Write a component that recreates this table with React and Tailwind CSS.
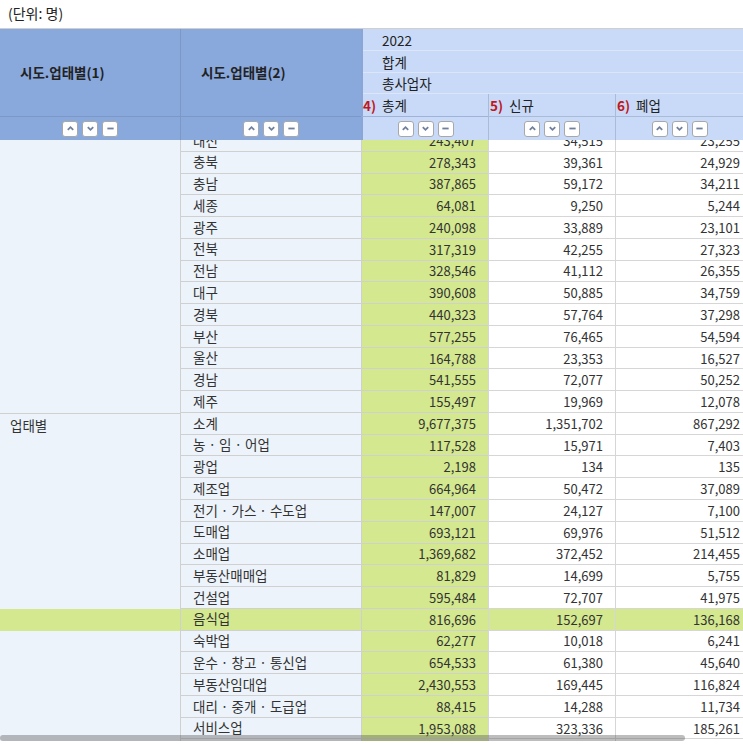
import React from "react";

const rows = [
  { name: "대전", a: "243,407", b: "34,515", c: "23,255" },
  { name: "충북", a: "278,343", b: "39,361", c: "24,929" },
  { name: "충남", a: "387,865", b: "59,172", c: "34,211" },
  { name: "세종", a: "64,081", b: "9,250", c: "5,244" },
  { name: "광주", a: "240,098", b: "33,889", c: "23,101" },
  { name: "전북", a: "317,319", b: "42,255", c: "27,323" },
  { name: "전남", a: "328,546", b: "41,112", c: "26,355" },
  { name: "대구", a: "390,608", b: "50,885", c: "34,759" },
  { name: "경북", a: "440,323", b: "57,764", c: "37,298" },
  { name: "부산", a: "577,255", b: "76,465", c: "54,594" },
  { name: "울산", a: "164,788", b: "23,353", c: "16,527" },
  { name: "경남", a: "541,555", b: "72,077", c: "50,252" },
  { name: "제주", a: "155,497", b: "19,969", c: "12,078" },
  { name: "소계", a: "9,677,375", b: "1,351,702", c: "867,292", group: "업태별" },
  { name: "농 · 임 · 어업", a: "117,528", b: "15,971", c: "7,403" },
  { name: "광업", a: "2,198", b: "134", c: "135" },
  { name: "제조업", a: "664,964", b: "50,472", c: "37,089" },
  { name: "전기 · 가스 · 수도업", a: "147,007", b: "24,127", c: "7,100" },
  { name: "도매업", a: "693,121", b: "69,976", c: "51,512" },
  { name: "소매업", a: "1,369,682", b: "372,452", c: "214,455" },
  { name: "부동산매매업", a: "81,829", b: "14,699", c: "5,755" },
  { name: "건설업", a: "595,484", b: "72,707", c: "41,975" },
  { name: "음식업", a: "816,696", b: "152,697", c: "136,168", active: true },
  { name: "숙박업", a: "62,277", b: "10,018", c: "6,241" },
  { name: "운수 · 창고 · 통신업", a: "654,533", b: "61,380", c: "45,640" },
  { name: "부동산임대업", a: "2,430,553", b: "169,445", c: "116,824" },
  { name: "대리 · 중개 · 도급업", a: "88,415", b: "14,288", c: "11,734" },
  { name: "서비스업", a: "1,953,088", b: "323,336", c: "185,261" },
  { name: "기타", a: "312,004", b: "41,220", c: "28,117" },
];

const cols = "grid grid-cols-[180px_181px_127px_127px_128px]";

// small sort / hide buttons under each column header
const SortButtons = () => (
  <div className="flex items-center justify-center gap-[4px]">
    <button className="w-[16px] h-[16px] flex items-center justify-center bg-white border border-[#a8a8a8] rounded-[3px]">
      <svg width="9" height="9" viewBox="0 0 10 10">
        <path d="M2 6.5 L5 3.5 L8 6.5" fill="none" stroke="#6f7f9c" strokeWidth="2" />
      </svg>
    </button>
    <button className="w-[16px] h-[16px] flex items-center justify-center bg-white border border-[#a8a8a8] rounded-[3px]">
      <svg width="9" height="9" viewBox="0 0 10 10">
        <path d="M2 3.5 L5 6.5 L8 3.5" fill="none" stroke="#6f7f9c" strokeWidth="2" />
      </svg>
    </button>
    <button className="w-[16px] h-[16px] flex items-center justify-center bg-white border border-[#a8a8a8] rounded-[3px]">
      <svg width="9" height="9" viewBox="0 0 10 10">
        <path d="M1.5 5 L8.5 5" fill="none" stroke="#6f7f9c" strokeWidth="2" />
      </svg>
    </button>
  </div>
);

const DataRow = ({ row }) => {
  const hl = row.active;
  return (
    <div className={`${cols} h-[21.77px] text-[13px] text-[#333] leading-none`}>
      <div
        className={`pl-[10px] pt-[5px] text-[13.5px] ${hl ? "bg-[#d3e88f]" : "bg-[#edf3fa]"} ${
          row.group ? "border-t border-[#d0d0d0]" : ""
        }`}
      >
        {row.group}
      </div>
      <div
        className={`flex items-center pl-[12px] text-[13.5px] border-l border-b border-[#d0d0d0] ${
          hl ? "bg-[#d3e88f]" : "bg-[#edf3fa]"
        }`}
      >
        {row.name}
      </div>
      <div className="flex items-center justify-end pr-[12px] bg-[#d3e88f] border-l border-b border-[#d0d0d0]">
        {row.a}
      </div>
      <div
        className={`flex items-center justify-end pr-[12px] border-l border-b border-[#d6d6d6] ${
          hl ? "bg-[#d3e88f]" : "bg-white"
        }`}
      >
        {row.b}
      </div>
      <div
        className={`flex items-center justify-end pr-[3px] border-l border-b border-[#d6d6d6] ${
          hl ? "bg-[#d3e88f]" : "bg-white"
        }`}
      >
        {row.c}
      </div>
    </div>
  );
};

export default function App() {
  return (
    <div
      className="relative w-[743px] h-[744px] overflow-hidden bg-white flex flex-col"
      style={{ fontFamily: '"Noto Sans CJK KR", "Noto Sans", sans-serif' }}
    >
      <div className="h-[28px] pl-[8px] pt-[3px] text-[14px] text-[#222] leading-[20px]">(단위: 명)</div>

      {/* header */}
      <div className={`${cols} border-t border-[#cfcfcf] text-[13.5px] text-[#222] leading-none`}>
        <div className="bg-[#89a8dc] h-[87px] flex items-center pl-[20px] font-bold">시도.업태별(1)</div>
        <div className="bg-[#89a8dc] h-[87px] flex items-center pl-[20px] font-bold border-l border-[#7d97c6]">
          시도.업태별(2)
        </div>
        <div className="col-span-3 bg-[#c9daf8] h-[87px] flex flex-col border-l-2 border-[#8aa5d6]">
          <div className="h-[22px] flex items-center pl-[19px] pt-[2px] border-b border-[#dce6f8]">2022</div>
          <div className="h-[22px] flex items-center pl-[19px] pt-[2px] border-b border-[#dce6f8]">합계</div>
          <div className="h-[21px] flex items-center pl-[19px] pt-[2px] border-b border-[#dce6f8]">총사업자</div>
          <div className="flex-1 grid grid-cols-[125px_127px_128px]">
            <div className="flex items-center pt-[2px]">
              <span className="text-[#c0171c] font-bold w-[19px]">4)</span>총계
            </div>
            <div className="flex items-center pl-[1px] pt-[2px] border-l border-[#aabbd8]">
              <span className="text-[#c0171c] font-bold w-[19px]">5)</span>신규
            </div>
            <div className="flex items-center pl-[1px] pt-[2px] border-l border-[#aabbd8]">
              <span className="text-[#c0171c] font-bold w-[19px]">6)</span>폐업
            </div>
          </div>
        </div>

        <div className="bg-[#89a8dc] h-[24px] flex items-center justify-center border-t border-[#7d97c6]">
          <SortButtons />
        </div>
        <div className="bg-[#89a8dc] h-[24px] flex items-center justify-center border-t border-l border-[#7d97c6]">
          <SortButtons />
        </div>
        <div className="bg-[#c9daf8] h-[24px] flex items-center justify-center border-t border-[#9fb3d8] border-l-2 border-l-[#8aa5d6]">
          <SortButtons />
        </div>
        <div className="bg-[#c9daf8] h-[24px] flex items-center justify-center border-t border-l border-[#aabbd8]">
          <SortButtons />
        </div>
        <div className="bg-[#c9daf8] h-[24px] flex items-center justify-center border-t border-l border-[#aabbd8]">
          <SortButtons />
        </div>
      </div>

      {/* body (scrolled) */}
      <div className="flex-1 overflow-hidden">
        <div className="-mt-[10px]">
          {rows.map((r) => (
            <DataRow key={r.name} row={r} />
          ))}
        </div>
      </div>

      {/* horizontal scrollbar overlay */}
      <div className="absolute left-0 bottom-[3px] w-[685px] h-[6px] rounded-[3px] bg-[rgba(90,90,90,0.4)]" />
      <div className="absolute left-0 bottom-0 w-full h-[3px] bg-white" />
    </div>
  );
}
